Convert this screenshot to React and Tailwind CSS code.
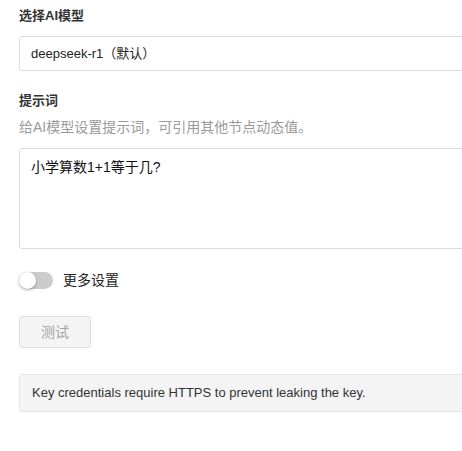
import React, { useState } from 'react';

// 节点配置面板（AI 模型）
const App = () => {
    const [moreSettings, setMoreSettings] = useState(false);
    const [prompt, setPrompt] = useState('小学算数1+1等于几?');

    return (
        <div className="w-full min-h-screen overflow-hidden bg-white text-[13px] text-[#333] font-['Liberation_Sans','Noto_Sans_CJK_SC',sans-serif]">
            <div className="w-[560px] pl-[19px] pt-[6px]">
                {/* 模型选择 */}
                <div className="font-bold leading-[20px]">选择AI模型</div>
                <div className="mt-[10px] h-[35px] flex items-center px-[11px] border border-[#dcdcdc] rounded-[3px] text-[#222]">
                    deepseek-r1（默认）
                </div>

                {/* 提示词 */}
                <div className="mt-[20px] font-bold leading-[20px]">提示词</div>
                <div className="mt-[6px] leading-[20px] text-[14px] text-[#9a9a9a]">给AI模型设置提示词，可引用其他节点动态值。</div>
                <textarea
                    value={prompt}
                    onChange={(e) => setPrompt(e.target.value)}
                    className="mt-[11px] block w-full h-[101px] resize-none px-[11px] pt-[8px] leading-[20px] text-[14px] text-[#111] border border-[#dcdcdc] rounded-[3px] focus:outline-none"
                />

                {/* 更多设置开关 */}
                <div className="mt-[23px] flex items-center gap-[10px] h-[17px]">
                    <button
                        onClick={() => setMoreSettings(!moreSettings)}
                        className={`w-[34px] h-[17px] rounded-full flex items-center ${moreSettings ? 'bg-[#1890ff] justify-end' : 'bg-[#cccccc] justify-start'}`}
                    >
                        <span className="w-[17px] h-[17px] rounded-full bg-white shadow-[0_1px_3px_rgba(0,0,0,0.35)]"></span>
                    </button>
                    <span className="text-[14px] text-[#222]">更多设置</span>
                </div>

                {/* 测试按钮 */}
                <button className="mt-[27px] w-[72px] h-[32px] flex items-center justify-center bg-[#f4f4f4] border border-[#dddddd] rounded-[3px] text-[14px] text-[#a5a5a5]">
                    测试
                </button>

                {/* 提示信息 */}
                <div className="mt-[26px] h-[38px] flex items-center px-[12px] bg-[#f4f4f4] border border-[#e6e6e6] rounded-[2px] text-[#333]">
                    Key credentials require HTTPS to prevent leaking the key.
                </div>
            </div>
        </div>
    );
};

export default App;
